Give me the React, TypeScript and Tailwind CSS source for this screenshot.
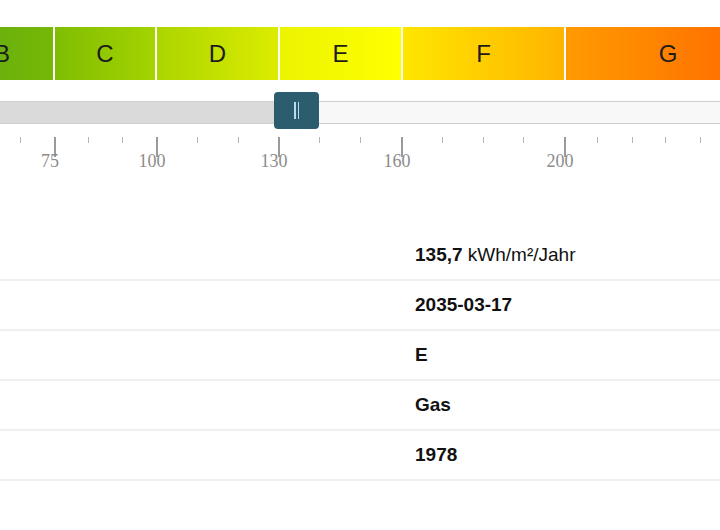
import React from "react";

const classes = [
  { label: "B", w: "w-[102px]", bg: "bg-gradient-to-r from-[#62ac12] to-[#76b805]" },
  { label: "C", w: "w-[100px]", bg: "bg-gradient-to-r from-[#7fbd03] to-[#a4d300]" },
  { label: "D", w: "w-[121px]", bg: "bg-gradient-to-r from-[#abd500] to-[#dcec00]" },
  { label: "E", w: "w-[121px]", bg: "bg-gradient-to-r from-[#ecf400] to-[#ffff00]" },
  { label: "F", w: "w-[161px]", bg: "bg-gradient-to-r from-[#ffe600] to-[#ffb400]" },
  { label: "G", w: "w-[204px]", bg: "bg-gradient-to-r from-[#ff9a00] to-[#ff6400]" },
];

const major = [
  { x: 54, v: "75" },
  { x: 156, v: "100" },
  { x: 278, v: "130" },
  { x: 401, v: "160" },
  { x: 564, v: "200" },
];

const minor = [20, 88, 122, 197, 238, 319, 360, 442, 483, 523, 597, 632, 665, 700];

const rows = [
  { bold: "135,7", rest: "kWh/m²/Jahr" },
  { bold: "2035-03-17" },
  { bold: "E" },
  { bold: "Gas" },
  { bold: "1978" },
];

export default function App() {
  return (
    <div className="w-[720px] h-[530px] bg-white overflow-hidden font-['Liberation_Sans',Arial,sans-serif]">
      {/* ── Energy class bar ── */}
      <div className="pt-[27px] ml-[-49px] flex gap-[2px] w-[820px]">
        {classes.map((c) => (
          <div
            key={c.label}
            className={`${c.w} ${c.bg} h-[53px] shrink-0 flex items-center justify-center text-[24px] text-[#1c1c1c]`}
          >
            {c.label}
          </div>
        ))}
      </div>

      {/* ── Slider ── */}
      <div className="relative mt-[12px] h-[37px]">
        <div className="absolute left-0 right-0 top-[9px] h-[23px] bg-[#f8f8f8] border-y border-[#cfcfcf]" />
        <div className="absolute left-0 w-[290px] top-[10px] h-[21px] bg-[#dadada]" />
        <div className="absolute left-[274px] top-0 w-[45px] h-[37px] rounded-[4px] bg-[#2c5d6f] flex items-center justify-center gap-[2px]">
          <span className="w-[1.5px] h-[17px] bg-[#b6dbea]" />
          <span className="w-[1.5px] h-[17px] bg-[#b6dbea]" />
        </div>
      </div>

      {/* ── Scale ── */}
      <div className="relative h-[94px] mt-[8px]">
        {minor.map((x) => (
          <span key={x} className="absolute top-0 w-px h-[6px] bg-[#b5b5b5]" style={{ left: x }} />
        ))}
        {major.map((m) => (
          <React.Fragment key={m.v}>
            <span className="absolute top-0 w-[1.5px] h-[20px] bg-[#9a9a9a]" style={{ left: m.x }} />
            <span
              className="absolute top-[13px] w-[60px] -ml-[34px] text-center text-[18px] leading-[22px] text-[#8c8c8c] font-['Liberation_Serif',serif]"
              style={{ left: m.x }}
            >
              {m.v}
            </span>
          </React.Fragment>
        ))}
      </div>

      {/* ── Details ── */}
      <div className="flex flex-col">
        {rows.map((r, i) => (
          <div
            key={i}
            className="h-[50px] border-b-2 border-[#f0f0f0] flex items-center pl-[415px] text-[19px] text-[#111]"
          >
            <p>
              <b>{r.bold}</b>
              {r.rest && " " + r.rest}
            </p>
          </div>
        ))}
      </div>
    </div>
  );
}
